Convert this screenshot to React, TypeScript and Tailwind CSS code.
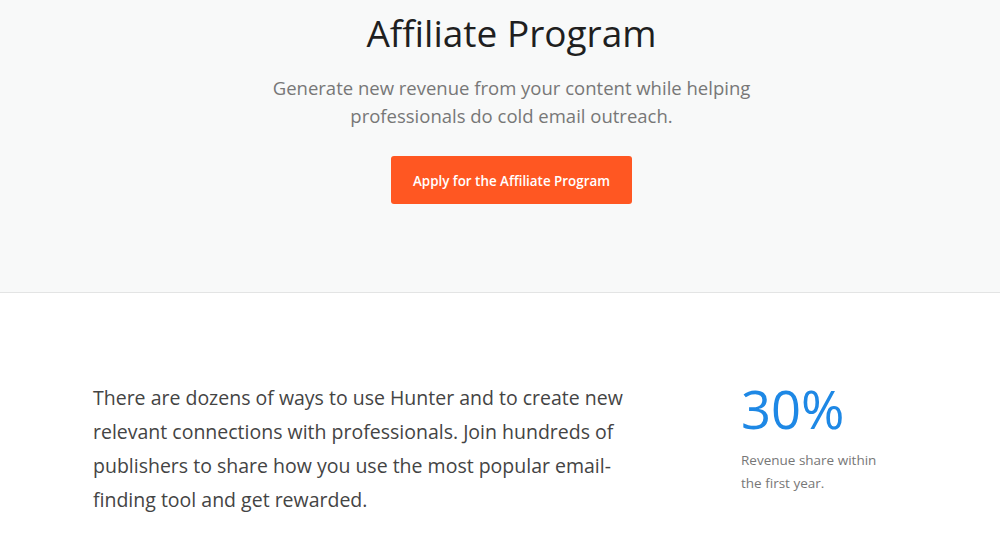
export default function App() {
  return (
    <div className="min-h-[533px] bg-white" style={{ fontFamily: '"Open Sans", sans-serif' }}>
      <section className="bg-[#f8f9f9] border-b border-[#e3e4e4] pt-[10px] pb-[88px] pl-[23px] flex flex-col items-center text-center">
        <h1 className="text-[37px] leading-[46px] text-[#1f1f1f] font-normal">Affiliate Program</h1>
        <p className="mt-[18px] text-[18.5px] leading-[28px] text-[#777777] max-w-[520px]">
          Generate new revenue from your content while helping professionals do cold email outreach.
        </p>
        <button className="mt-[26px] w-[241px] h-[48px] pt-[3px] rounded-[3px] bg-[#ff5722] text-white text-[13.4px] font-semibold">
          Apply for the Affiliate Program
        </button>
      </section>
      <section className="pt-[88px] pl-[93px] flex">
        <p className="w-[545px] text-[19.5px] leading-[34px] text-[#444444]">
          There are dozens of ways to use Hunter and to create new relevant connections with professionals. Join hundreds of publishers to share how you use the most popular email-finding tool and get rewarded.
        </p>
        <div className="ml-[103px] -mt-[4px]">
          <div className="text-[52.5px] leading-[64px] text-[#1e88e5]">30%</div>
          <div className="mt-[8px] text-[13.5px] leading-[23px] text-[#777777] w-[150px]">Revenue share within the first year.</div>
        </div>
      </section>
    </div>
  );
}
